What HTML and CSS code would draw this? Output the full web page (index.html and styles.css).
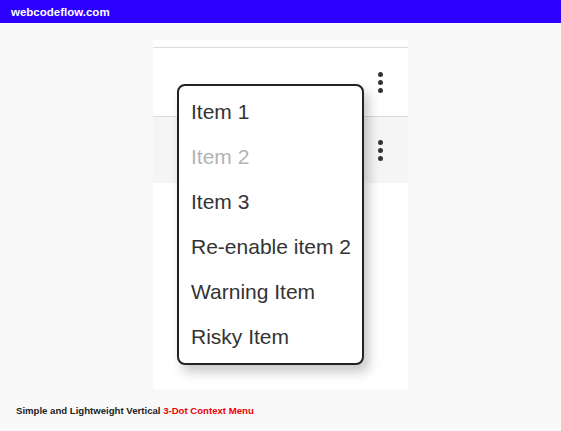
FILE: index.html
```html
<!DOCTYPE html>
<html>
<head>
<meta charset="utf-8">
<link rel="stylesheet" href="styles.css">
</head>
<body>
<header class="topbar">webcodeflow.com</header>
<main class="stage">
  <section class="panel">
    <div class="row">
      <button class="dots" aria-label="menu"><span></span><span></span><span></span></button>
      <ul class="menu">
        <li>Item 1</li>
        <li class="disabled">Item 2</li>
        <li>Item 3</li>
        <li>Re-enable item 2</li>
        <li>Warning Item</li>
        <li>Risky Item</li>
      </ul>
    </div>
    <div class="row alt">
      <button class="dots" aria-label="menu"><span></span><span></span><span></span></button>
    </div>
  </section>
</main>
<footer class="caption">Simple and Lightweight Vertical <span class="accent">3-Dot Context Menu</span></footer>
</body>
</html>
```
FILE: styles.css
```css
html, body {
  margin: 0;
  padding: 0;
}
body {
  width: 561px;
  height: 431px;
  background: #f9f9f9;
  font-family: "Liberation Sans", Arial, sans-serif;
  overflow: hidden;
}
.topbar {
  height: 23px;
  background: #2b00ff;
  color: #fff;
  font-weight: bold;
  font-size: 11.5px;
  line-height: 24px;
  padding-left: 11px;
  box-sizing: border-box;
}
.stage {
  display: flex;
  justify-content: center;
  padding-top: 17px;
}
.panel {
  width: 255px;
  height: 349px;
  background: #fff;
  padding-top: 7px;
  box-sizing: border-box;
}
.row {
  height: 68px;
  border-top: 1px solid #dcdcdc;
  display: flex;
  justify-content: flex-end;
  align-items: center;
  position: relative;
}
.row.alt {
  height: 66px;
  background: #f5f5f5;
}
.dots {
  border: 0;
  background: transparent;
  padding: 0;
  width: 10px;
  margin-right: 23px;
  display: flex;
  flex-direction: column;
  align-items: center;
  gap: 3px;
}
.dots span {
  width: 5px;
  height: 5px;
  border-radius: 50%;
  background: #333;
}
.menu {
  position: absolute;
  left: 24px;
  top: 36px;
  z-index: 2;
  width: 187px;
  height: 281px;
  box-sizing: border-box;
  margin: 0;
  padding: 3px 0 4px;
  list-style: none;
  background: #fff;
  border: 2px solid #222;
  border-radius: 8px;
  box-shadow: 5px 7px 12px rgba(0,0,0,0.22);
}
.menu li {
  height: 45px;
  line-height: 45px;
  padding-left: 12px;
  font-size: 21px;
  color: #333;
}
.menu li.disabled {
  color: #b3b3b3;
}
.caption {
  margin-top: 16px;
  padding-left: 16px;
  line-height: 12px;
  font-size: 9.6px;
  font-weight: bold;
  color: #222;
}
.caption .accent {
  color: #ee0000;
}
```
